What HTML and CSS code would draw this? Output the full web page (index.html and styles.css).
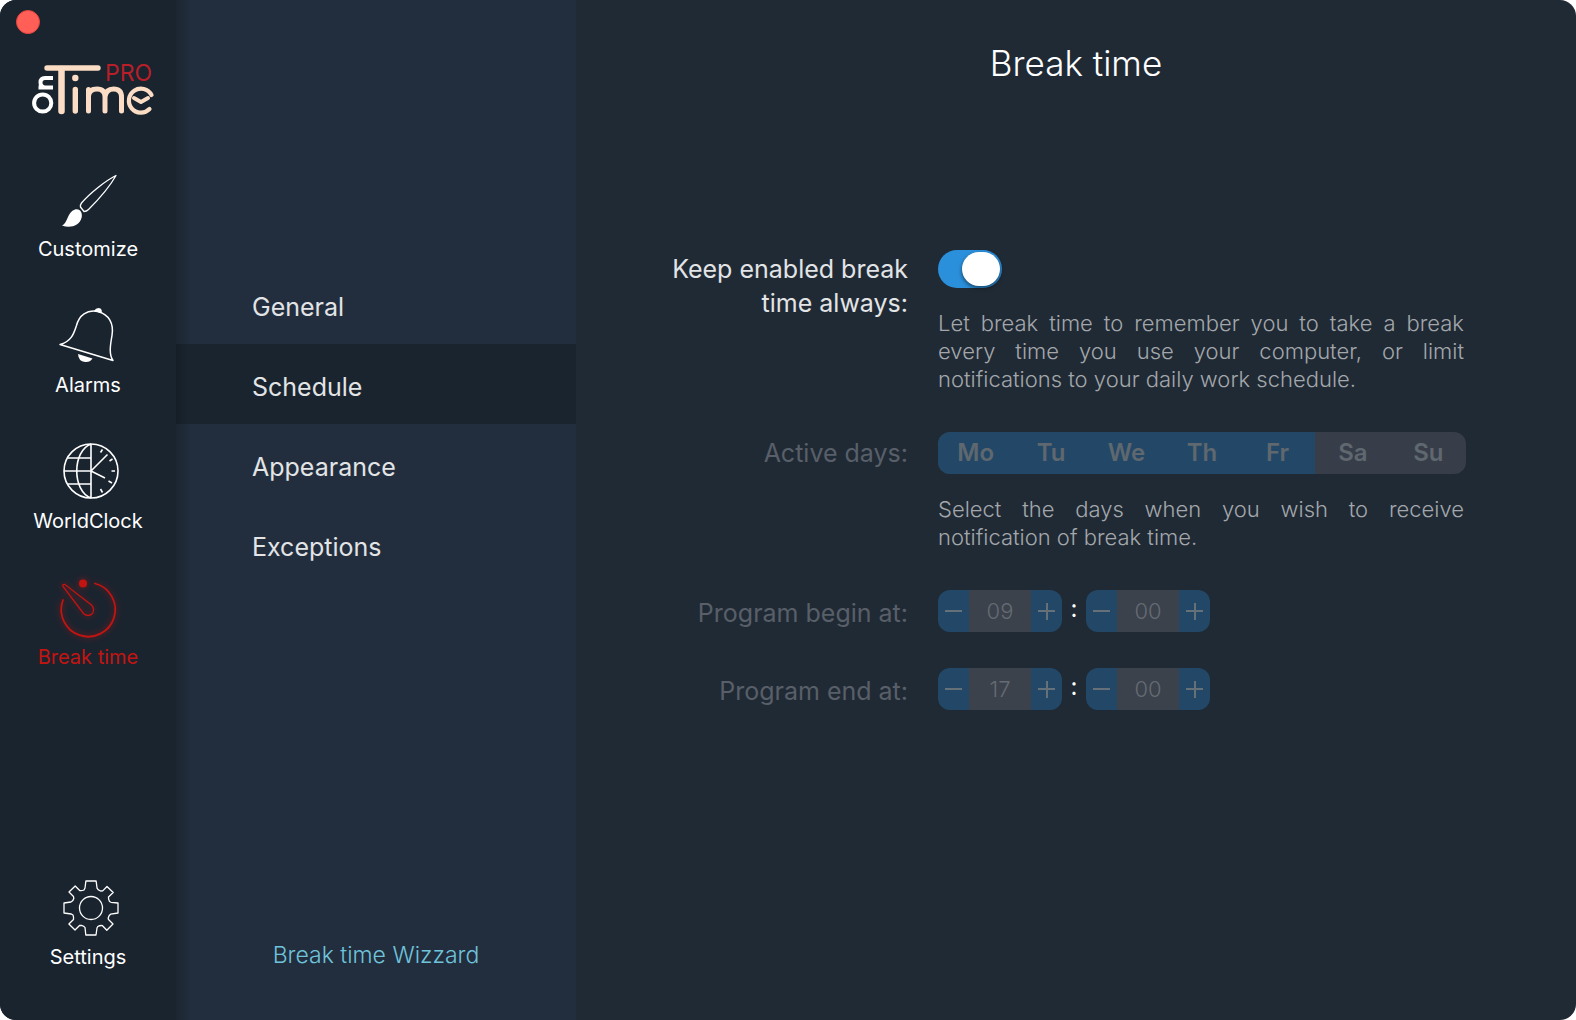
FILE: index.html
```html
<!DOCTYPE html>
<html lang="en">
<head>
<meta charset="utf-8">
<title>Break time</title>
<link rel="stylesheet" href="styles.css">
</head>
<body>
<div class="window">
  <nav class="rail" aria-label="Sections">
    <button class="close" type="button" aria-label="Close"></button>
    <svg class="logo" viewBox="0 0 124 52" role="img" aria-label="onTime PRO">
      <g fill="none" stroke="#fbdcc4" stroke-width="5.400" stroke-linecap="round" stroke-linejoin="round">
        <path d="M15 4H66"/>
        <path d="M29.500 5V47" stroke-width="6.500"/>
        <path d="M43.300 25.500V47"/>
        <path d="M56.500 47V25.500M56.500 32Q57 25 65 25Q73 25 73 33V47M73 33Q74 25 81.500 25Q89.500 25 89.500 33V47" stroke-width="5"/>
        <path d="M119.500 31A12 12 0 1 0 117.500 45" stroke-width="4.200"/>
        <path d="M102 34L109 38L116 34" stroke-width="4"/>
      </g>
      <circle cx="43.300" cy="14" r="3.200" fill="#fbdcc4"/>
      <g fill="none" stroke="#fff" stroke-width="4">
        <circle cx="10.700" cy="39" r="8.600"/>
        <path d="M21 23.500H6.500M21 14H13Q8.500 14 8.500 18.500Q8.500 23 13 23.500"/>
      </g>
      <text class="logo-pro" x="73" y="17">PRO</text>
    </svg>
    <a class="rail-item" href="#customize">
      <svg class="icon" viewBox="0 0 56 56" fill="none" stroke="#fff" stroke-width="1.300" stroke-linejoin="round">
        <path d="M54 3.500C43 9 27 22 19.500 31Q18 33 18.500 35L22 39.500Q24.500 39.500 26.500 37.500C36 28 47 16 54 3.500Z"/>
        <path d="M13 37.500C18 36 21 41 19.500 46C17.500 54 8 56.500 0 53.500C6 51 5 40 13 37.500Z" fill="#fff" stroke="none"/>
      </svg>
      Customize
    </a>
    <a class="rail-item" href="#alarms">
      <svg class="icon" viewBox="0 0 56 56" fill="none" stroke="#fff" stroke-width="1.500" stroke-linejoin="round">
        <path d="M-2 36.500C10 33.500 12 24.500 14.500 17.500C17 7.500 25 1 36 3.500C47 6.500 52 15.500 50 27.500C48 38.500 47 46.500 51 52.500Z"/>
        <path d="M32 3Q34.500 -1 38.500 0.500Q40.500 2 39.500 5.500Z" fill="#fff" stroke="none"/>
        <path d="M16 46L30.500 50.500Q28 54.500 23 54Q16.500 53.500 16 46Z" fill="#fff" stroke="none"/>
      </svg>
      Alarms
    </a>
    <a class="rail-item" href="#worldclock">
      <svg class="icon" viewBox="-1 1 56 56" fill="none" stroke="#fff" stroke-width="1.600">
        <circle cx="28" cy="28" r="27"/>
        <path d="M28 1V55M1 28H28M5 15H28M5 41H28M28 1C9 8 9 48 28 55M28 28L44.500 11.500M28 28L42 35"/>
        <path d="M37.500 9.500L39.500 6.500M46.500 18L49.500 16M48.500 28H52M45.500 38L49 40M37.500 46L39.500 49.500"/>
      </svg>
      WorldClock
    </a>
    <a class="rail-item active" href="#breaktime" aria-current="page">
      <svg class="icon" viewBox="-1 -3 56 56" fill="none" stroke="#c41411" stroke-width="1.800" stroke-linecap="round">
        <path d="M32 0.500A27 27 0 1 1 0 17"/>
        <path d="M0 3.500Q-1 1 2 1.500L28.500 22Q32 26 29.500 30.500Q25 34.500 20.500 30.500Z" stroke-width="1.300"/>
        <circle cx="20" cy="0.500" r="4" fill="#c41411" stroke="none"/>
      </svg>
      Break time
    </a>
    <a class="rail-item settings" href="#settings">
      <svg class="icon" viewBox="-1 0 56 56" fill="none" stroke="#fff" stroke-width="1.300" stroke-linejoin="round">
        <path d="M22.900 1H33.100L34.100 8.300Q34.700 10 37.500 11L39.700 10.900L44 6.500L50.200 12.500L45.500 17Q45.200 19 46.500 21.500L48 22.300L55 23V33L47.700 34.200Q46 35 45.200 38L45.500 39.500L50 44L43.800 50.300L39.500 45.700Q37.500 45 34.800 46.500L34 48L33 55H22.800L22 47.500Q21 46 18.500 45.300L16.500 45.500L12 50L5.900 44L10.500 39.500Q11 37.500 10 35L8.300 34L1 33V23L8 22Q10 21.300 10.800 18.500L10.500 16.500L6 12L12.200 6L16.700 10.500Q18.500 11 21 10L22 8Z"/>
        <circle cx="28" cy="28" r="11.500"/>
      </svg>
      Settings
    </a>
  </nav>

  <nav class="menu" aria-label="Break time">
    <a href="#general">General</a>
    <a class="selected" href="#schedule" aria-current="page">Schedule</a>
    <a href="#appearance">Appearance</a>
    <a href="#exceptions">Exceptions</a>
    <a class="wizard" href="#wizard">Break time Wizzard</a>
  </nav>

  <main class="panel">
    <h1>Break time</h1>
    <form class="settings-grid">
      <label class="name" for="always">Keep enabled break time always:</label>
      <div class="field">
        <input class="switch" id="always" type="checkbox" role="switch" checked>
        <p class="hint">Let break time to remember you to take a break every time you use your computer, or limit notifications to your daily work schedule.</p>
      </div>

      <span class="name off" id="days-name">Active days:</span>
      <div class="field">
        <div class="days" role="group" aria-labelledby="days-name">
          <label><input type="checkbox" checked disabled>Mo</label>
          <label><input type="checkbox" checked disabled>Tu</label>
          <label><input type="checkbox" checked disabled>We</label>
          <label><input type="checkbox" checked disabled>Th</label>
          <label><input type="checkbox" checked disabled>Fr</label>
          <label><input type="checkbox" disabled>Sa</label>
          <label><input type="checkbox" disabled>Su</label>
        </div>
        <p class="hint">Select the days when you wish to receive notification of break time.</p>
      </div>

      <label class="name off at" for="begin-hour">Program begin at:</label>
      <div class="time">
        <div class="stepper">
          <button type="button" class="minus" aria-label="Hour down" disabled></button>
          <input id="begin-hour" type="text" value="09" disabled>
          <button type="button" class="plus" aria-label="Hour up" disabled></button>
        </div>
        <span class="colon">:</span>
        <div class="stepper">
          <button type="button" class="minus" aria-label="Minute down" disabled></button>
          <input type="text" value="00" aria-label="Begin minute" disabled>
          <button type="button" class="plus" aria-label="Minute up" disabled></button>
        </div>
      </div>

      <label class="name off at" for="end-hour">Program end at:</label>
      <div class="time">
        <div class="stepper">
          <button type="button" class="minus" aria-label="Hour down" disabled></button>
          <input id="end-hour" type="text" value="17" disabled>
          <button type="button" class="plus" aria-label="Hour up" disabled></button>
        </div>
        <span class="colon">:</span>
        <div class="stepper">
          <button type="button" class="minus" aria-label="Minute down" disabled></button>
          <input type="text" value="00" aria-label="End minute" disabled>
          <button type="button" class="plus" aria-label="Minute up" disabled></button>
        </div>
      </div>
    </form>
  </main>
</div>
</body>
</html>
```
FILE: styles.css
```css
* { box-sizing: border-box; }

body {
  margin: 0;
  background: #fff;
  font-family: Inter, "Liberation Sans", sans-serif;
  color: #e2e4e6;
}

a { color: inherit; text-decoration: none; }
p, h1 { margin: 0; font-weight: 300; }
button, input { margin: 0; padding: 0; border: 0; font: inherit; }

.window {
  display: grid;
  grid-template-columns: 176px 400px 1fr;
  min-height: 100vh;
  border-radius: 16px;
  overflow: hidden;
  background: #202a35;
}

/* Icon rail */
.rail {
  display: flex;
  flex-direction: column;
  background: #1a242f;
  padding-bottom: 50px;
}

.close {
  width: 24px;
  height: 24px;
  margin: 10px 16px 28px;
  border: 1px solid #e2463f;
  border-radius: 50%;
  background: #ff5f57;
}

.logo {
  width: 124px;
  height: 52px;
  margin: 2px 0 56px 32px;
  overflow: visible;
}

.logo-pro {
  font-size: 23px;
  fill: #b81f28;
}

.rail-item {
  display: flex;
  flex-direction: column;
  align-items: center;
  gap: 8px;
  height: 136px;
  font-size: 20px;
  line-height: 26px;
  color: #fff;
}

.icon {
  width: 56px;
  height: 56px;
  margin-left: 4px;
  overflow: visible;
}

.rail-item.active { color: #c41411; }
.active .icon { filter: drop-shadow(0 0 3px #c41411aa); }
.rail-item.settings { height: auto; margin-top: auto; }

/* Sub menu */
.menu {
  display: flex;
  flex-direction: column;
  padding: 264px 0 36px;
  background: linear-gradient(to right, #1c2631, #222e3e 16px);
}

.menu a {
  padding: 6px 0 0 76px;
  font-size: 25px;
  line-height: 74px;
}

.menu .selected { background: linear-gradient(to right, #151e27, #1a242f 12px); }

.menu .wizard {
  margin-top: auto;
  padding: 0;
  font-size: 23px;
  font-weight: 300;
  line-height: 58px;
  text-align: center;
  color: #6fc3da;
}

/* Settings panel */
.panel { padding: 39px 0; }

h1 {
  font-size: 35px;
  line-height: 48px;
  text-align: center;
  color: #fff;
}

.settings-grid {
  display: grid;
  grid-template-columns: 1fr 2fr;
  column-gap: 30px;
  row-gap: 36px;
  padding: 163px 110px 0 68px;
}

.name {
  padding-top: 2px;
  font-size: 25px;
  line-height: 34px;
  text-align: right;
}

.name.off { padding-top: 4px; color: #585f68; }
.name.at { padding-top: 6px; }

.hint {
  margin-top: 21px;
  padding: 0 2px 3px 0;
  font-size: 22px;
  line-height: 28px;
  text-align: justify;
  color: #a3a7ab;
}

.switch {
  display: block;
  appearance: none;
  width: 64px;
  height: 38px;
  padding: 2px;
  border-radius: 19px;
  background: #2b90db;
}

.switch::before {
  content: "";
  display: block;
  width: 38px;
  height: 34px;
  margin-left: auto;
  border-radius: 17px;
  background: #fff;
  box-shadow: 0 2px 4px #0008;
}

.days {
  display: grid;
  grid-template-columns: repeat(7, 1fr);
  border-radius: 12px;
  overflow: hidden;
  background: #373d49;
}

.days label {
  font-size: 24px;
  font-weight: 600;
  line-height: 42px;
  text-align: center;
  color: #5f676f;
}

.days label:has(:checked) { background: #234867; }

.days input {
  position: absolute;
  appearance: none;
}

.time { display: flex; }

.stepper {
  display: flex;
  width: 124px;
  height: 42px;
  border-radius: 12px;
  overflow: hidden;
}

.stepper input {
  width: 62px;
  background: #3b424b;
  color: #646b73;
  font-size: 22px;
  font-weight: 300;
  text-align: center;
}

.stepper button {
  width: 31px;
  background: #234867;
  display: grid;
  place-items: center;
}

.stepper button::before,
.plus::after {
  content: "";
  grid-area: 1 / 1;
  width: 17px;
  height: 2px;
  background: #667079;
}

.plus::after { width: 2px; height: 17px; }

.colon {
  width: 24px;
  font-size: 24px;
  line-height: 38px;
  text-align: center;
  color: #fff;
}
```
